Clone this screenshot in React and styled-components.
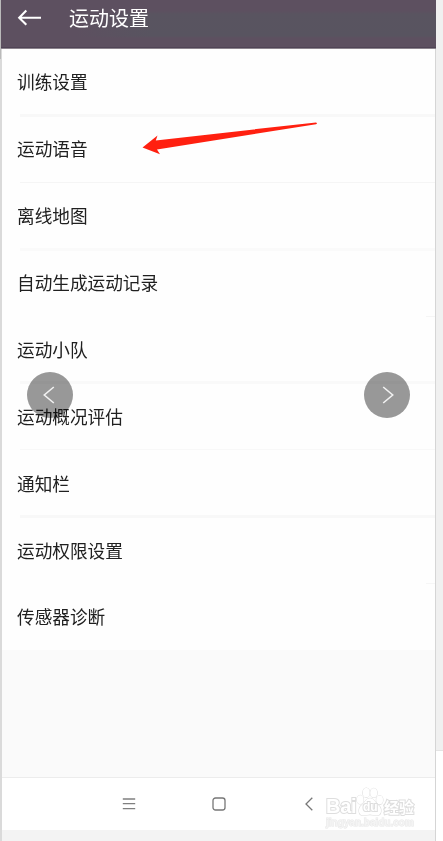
import React from 'react'
import styled, { createGlobalStyle } from "styled-components"

const rows = [
  { title: "训练设置", line: "#f8f8f8", thick: 3 },
  { title: "运动语音", line: "#f5f5f5", thick: 1 },
  { title: "离线地图", line: "#fafafa", thick: 3 },
  { title: "自动生成运动记录", line: "#f5f5f5", thick: 1, short: true },
  { title: "运动小队", line: "#f9f9f9", thick: 3 },
  { title: "运动概况评估", line: "#f8f8f8", thick: 1 },
  { title: "通知栏", line: "#f8f8f8", thick: 3 },
  { title: "运动权限设置", line: "#f6f6f6", thick: 1, short: true },
  { title: "传感器诊断" },
]

function Header() {
  return (
    <HeaderBar>
      <svg width="24" height="20" viewBox="0 0 24 20" fill="none" stroke="#fff" strokeWidth="2.1">
        <path d="M24 9.7H2.5M9.3 2.6L2.2 9.7L9.3 16.8" />
      </svg>
      <HeaderTitle>运动设置</HeaderTitle>
    </HeaderBar>
  )
}

function Arrow() {
  return (
    <ArrowMark width="178" height="36" viewBox="0 0 178 36">
      <path d="M2.5 27.5L17.5 15.4L15.8 20.4L176 2.4Q178 3.2 176 4.2L17 29.4L20 34.2Z" fill="#ff2010" />
    </ArrowMark>
  )
}

function Watermark() {
  return (
    <Mark>
      <MarkTop>
        <Latin>Bai</Latin>
        <Paw>
          <svg width="28" height="30" viewBox="0 0 30 32" fill="#fff" stroke="#dedede" strokeWidth="1.2">
            <ellipse cx="4.5" cy="13.5" rx="3.6" ry="4.7" />
            <ellipse cx="11" cy="6" rx="3.7" ry="5" />
            <ellipse cx="19" cy="6.2" rx="3.7" ry="5" />
            <ellipse cx="25.3" cy="13.8" rx="3.6" ry="4.7" />
            <path d="M15 12C10.5 12 9.5 17 6 19.5C2 22.5 2 30.5 8 30.5C11 30.5 12 29.5 15 29.5C18 29.5 19 30.5 22 30.5C28 30.5 28 22.5 24 19.5C20.5 17 19.5 12 15 12Z" />
          </svg>
          <PawText>du</PawText>
        </Paw>
        <Chinese>经验</Chinese>
      </MarkTop>
      <MarkUrl>jingyan.baidu.com</MarkUrl>
    </Mark>
  )
}

function App() {
  return (
    <Wrap>
      <GlobalStyle />
      <LeftEdge />
      <Phone>
        <Header />
        <List>
          {rows.map((row) => (
            <Row key={row.title}>
              <RowText>{row.title}</RowText>
              {row.line && <Line $color={row.line} $thick={row.thick} $short={row.short} />}
            </Row>
          ))}
        </List>
        <Empty />
        <NavBar>
          <svg width="14" height="14" viewBox="0 0 14 14" stroke="#808080" strokeWidth="1.3">
            <path d="M.8 2H13.2M.8 6.7H13.2M.8 11.7H13.2" />
          </svg>
          <svg width="14" height="14" viewBox="0 0 14 14" fill="none" stroke="#777" strokeWidth="1.3">
            <rect x="1" y="1" width="12" height="12" rx="2.5" />
          </svg>
          <svg width="8" height="14" viewBox="0 0 8 14" fill="none" stroke="#777" strokeWidth="1.3">
            <path d="M7.3 .8L1 7L7.3 13.2" />
          </svg>
        </NavBar>
        <Footer />
      </Phone>
      <RightEdge />
      <Arrow />
      <RoundButton $left={27}>
        <svg width="14" height="18" viewBox="0 0 14 18" fill="none" stroke="#f2f2f2" strokeWidth="1.6">
          <path d="M10.8 1L1.3 9L10.8 17" />
        </svg>
      </RoundButton>
      <RoundButton $left={364}>
        <svg width="14" height="18" viewBox="0 0 14 18" fill="none" stroke="#f2f2f2" strokeWidth="1.6">
          <path d="M3.2 1L12.7 9L3.2 17" />
        </svg>
      </RoundButton>
      <Watermark />
    </Wrap>
  )
}

export default App

const GlobalStyle = createGlobalStyle`
body {
  margin: 0;
  overflow: hidden;
  font-family: "Noto Sans CJK SC", "Noto Sans", sans-serif;
}
svg {
  display: block;
}
`

const Wrap = styled.div`
position: relative;
display: flex;
width: 443px;
height: 841px;
overflow: hidden;
background: #fff;
`

const LeftEdge = styled.div`
width: 1px;
border-right: 1px solid #dadada;
background: linear-gradient(#bababa 59px, #dadada 59px);
`

const Phone = styled.div`
display: flex;
flex-direction: column;
width: 433px;
background: #fefefe;
border-right: 1px solid #d5d5d5;
`

const RightEdge = styled.div`
width: 7px;
height: 750px;
background: #f0f0f0;
border-bottom: 1px solid #e4e4e4;
`

const HeaderBar = styled.div`
display: flex;
align-items: flex-start;
box-sizing: border-box;
height: 49px;
margin: 0 -1px;
padding: 8px 0 0 16px;
background: linear-gradient(90deg, #5d5060 75px, transparent 150px),
  linear-gradient(#5d5060 11px, #595460 14px, #585460 36px, #5d5060 38px);
border-bottom: 1px solid #8b838c;
box-shadow: inset 0 -1px #504456;
`

const HeaderTitle = styled.div`
margin-left: 28px;
margin-top: -5px;
font-size: 20px;
line-height: 30px;
color: #fff;
font-weight: 400;
`

const List = styled.div`
display: flex;
flex-direction: column;
height: 601px;
`

const Row = styled.div`
display: flex;
flex-direction: column;
justify-content: space-between;
flex: 0 0 66.9px;
`

const RowText = styled.div`
padding: 20.3px 0 0 15px;
font-size: 17.65px;
line-height: 26px;
color: #202020;
`

const Line = styled.div`
height: ${props => props.$thick}px;
margin-left: ${props => props.$short ? 424 : 18}px;
margin-bottom: ${props => props.$thick === 1 ? 0 : -1}px;
background: ${props => props.$color};
`

const Empty = styled.div`
height: 127px;
background: #fafafa;
border-bottom: 1px solid #ececec;
`

const NavBar = styled.div`
display: flex;
align-items: flex-start;
box-sizing: border-box;
height: 52px;
padding: 19px 0 0 120px;
gap: 76px;
background: #fff;

svg:last-child {
  margin-left: 3px;
}
`

const Footer = styled.div`
flex: 1;
background: #f3f3f3;
`

const ArrowMark = styled.svg`
position: absolute;
left: 140px;
top: 120px;
`

const RoundButton = styled.div`
position: absolute;
left: ${props => props.$left}px;
top: 372px;
display: flex;
align-items: center;
justify-content: center;
width: 46px;
height: 46px;
border-radius: 50%;
background: #999;
mix-blend-mode: multiply;
`

const Mark = styled.div`
position: absolute;
left: 326px;
top: 786px;
width: 92px;
color: #fff;
font-family: "Liberation Sans", "Noto Sans CJK SC", sans-serif;
font-weight: bold;
paint-order: stroke fill;
-webkit-text-stroke: 2px #dedede;
`

const MarkTop = styled.div`
display: flex;
align-items: flex-end;
height: 31px;
`

const Latin = styled.span`
font-size: 20px;
line-height: 21px;
width: 30px;
letter-spacing: -0.3px;
`

const Paw = styled.span`
position: relative;
width: 28px;
`

const PawText = styled.span`
position: absolute;
left: 7px;
top: 13px;
font-size: 12px;
line-height: 14px;
`

const Chinese = styled.span`
font-size: 15px;
line-height: 19px;
`

const MarkUrl = styled.div`
font-size: 10px;
line-height: 12px;
color: #f4f4f4;
-webkit-text-stroke: 1px #e8e8e8;
`
